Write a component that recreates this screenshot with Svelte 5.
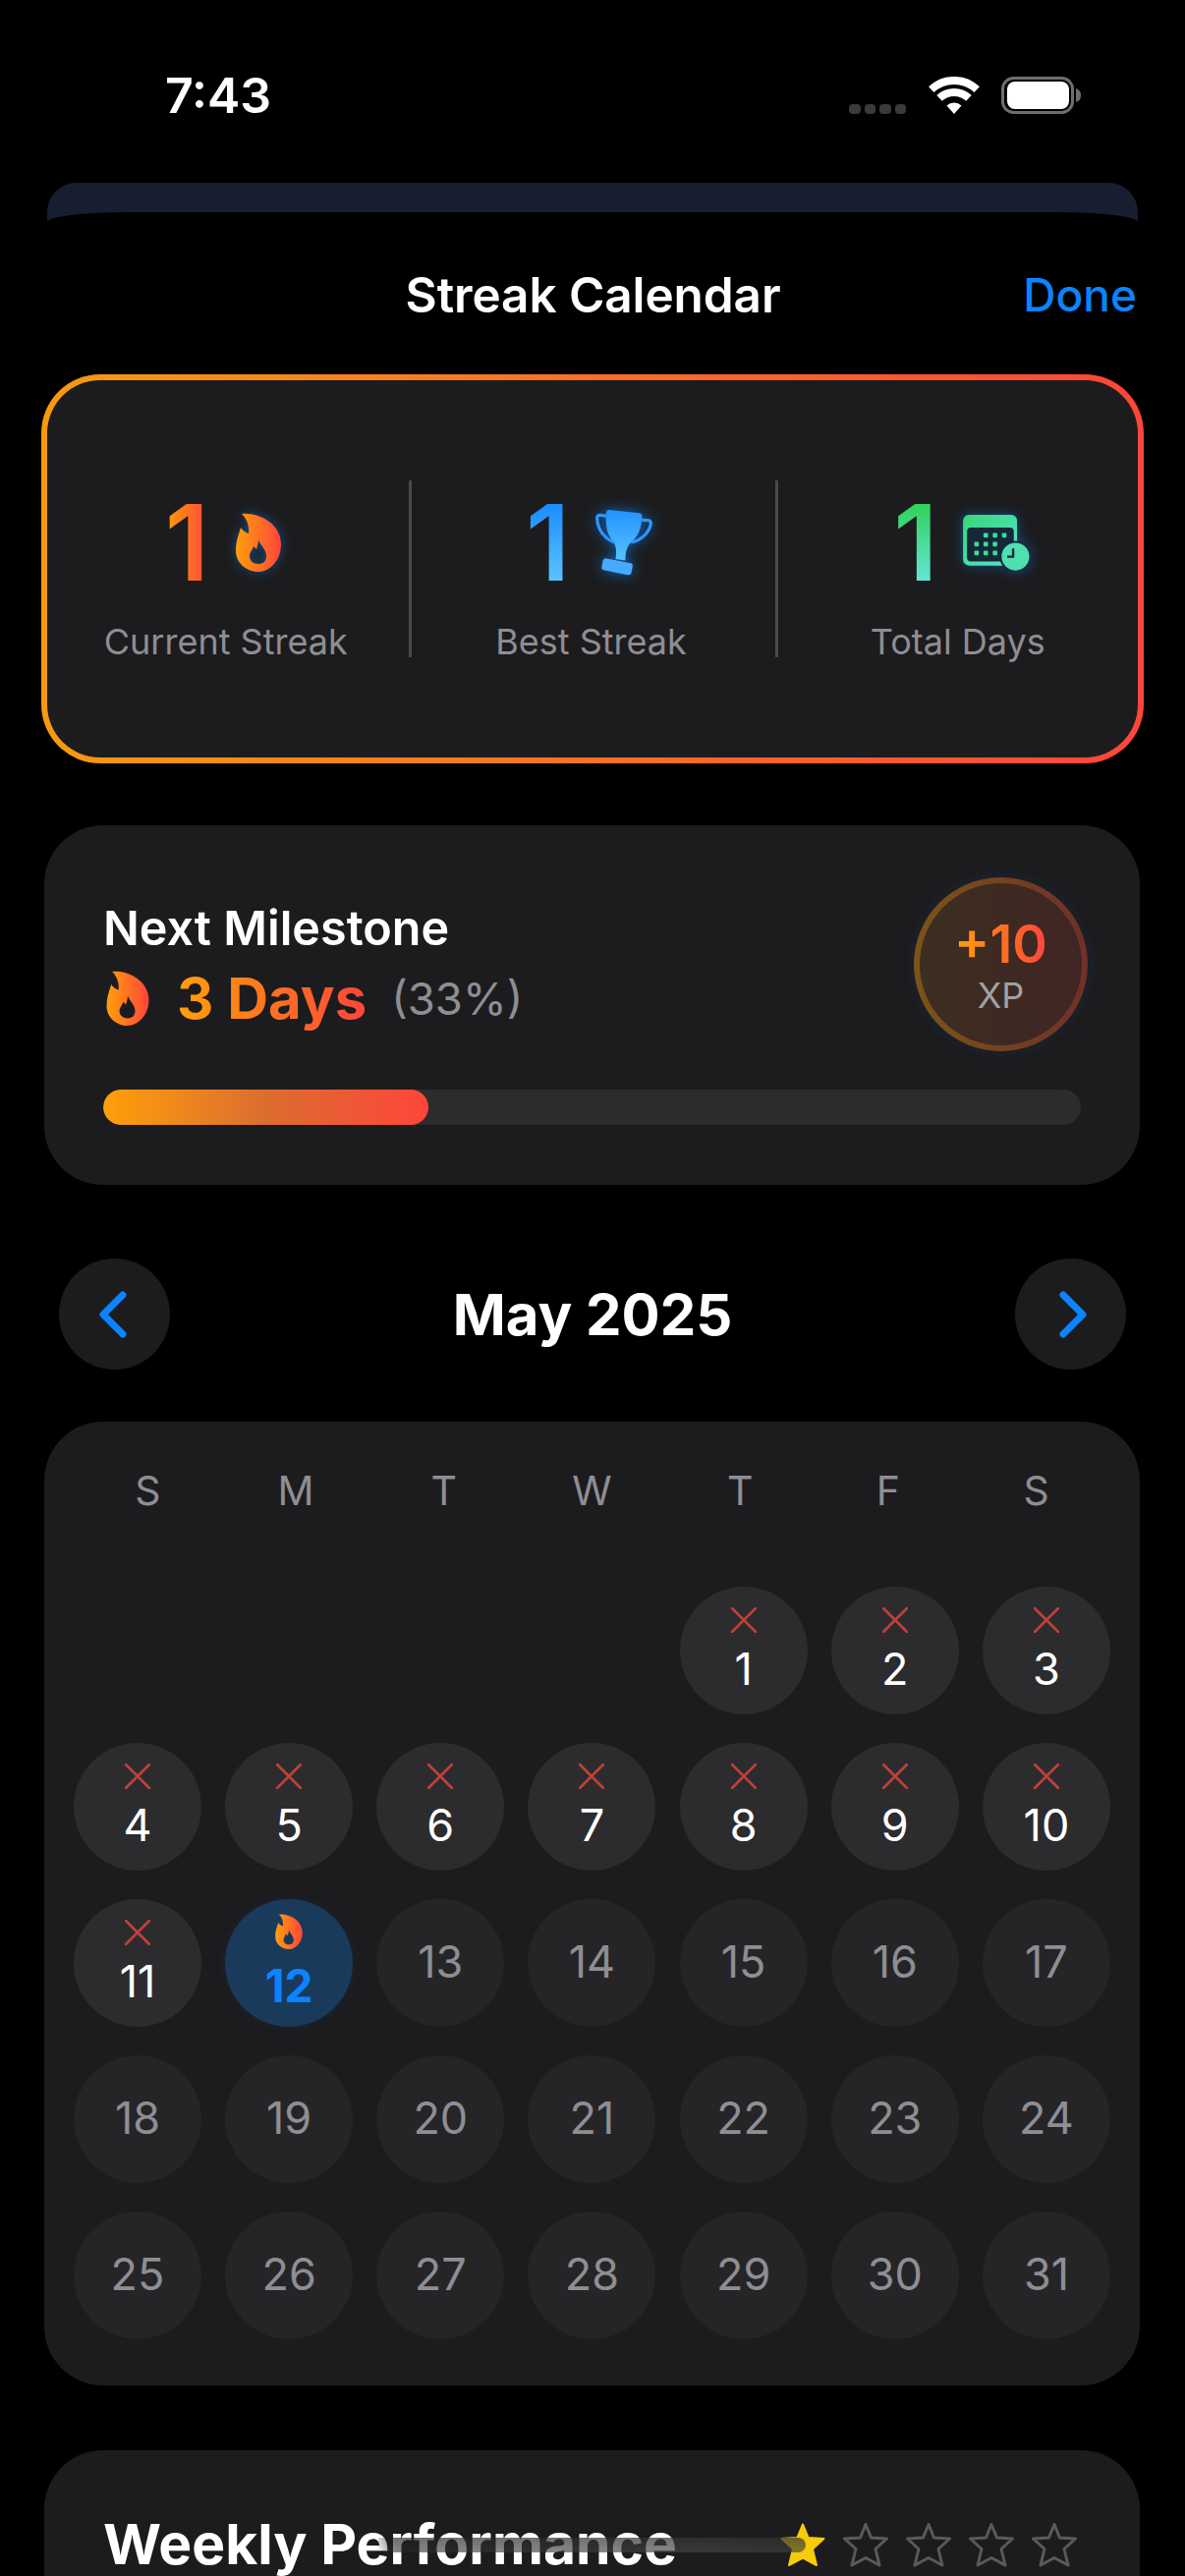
<script>
  const weekdays = ['S', 'M', 'T', 'W', 'T', 'F', 'S'];
  const blanks = [0, 1, 2, 3];
  const days = Array.from({ length: 31 }, (_, i) => i + 1);
  const stars = [1, 2, 3, 4];
  const flame = 'M6 1C22-1 46 10 46 32C46 50 33 60 23 60C10 60 0 50 0 39C0 28 3 22 5 15C7 18 10 20 13 21C14 13 11 6 6 1ZM23 27C24 32 31 37 31 44C31 50 27 52 23 52C18 52 14 49 14 44C14 40 17 38 18 34C20 36 21 37 21 37C22 34 23 30 23 27Z';
  const starPath = 'M23 1.5L28.5 15L44.5 16L33 26.5L37 43L23 35.5L9 43L13 26.5L1.5 16L17.5 15Z';
</script>

<div class="page">
  <svg class="defs" width="0" height="0" aria-hidden="true">
    <defs>
      <linearGradient id="fire" x1="0" y1="0" x2="1" y2="0">
        <stop offset="0" stop-color="#ff9f0a" />
        <stop offset="1" stop-color="#ff453a" />
      </linearGradient>
      <linearGradient id="blue" x1="0" y1="0" x2="0" y2="1">
        <stop offset="0" stop-color="#2293ff" />
        <stop offset="1" stop-color="#5abfff" />
      </linearGradient>
      <linearGradient id="green" x1="0" y1="0" x2="1" y2="1">
        <stop offset="0" stop-color="#34d778" />
        <stop offset="1" stop-color="#5ce2cc" />
      </linearGradient>
    </defs>
  </svg>

  <header class="status">
    <span class="time">7:43</span>
    <div class="status-icons">
      <div class="signal"><i></i><i></i><i></i><i></i></div>
      <svg class="wifi" viewBox="0 0 52 38">
        <path d="M2.8 13.1A34 34 0 0 1 49.2 13.1M11 21.9A22 22 0 0 1 41 21.9" fill="none" stroke="#fff" stroke-width="8" />
        <path d="M26 38L18.5 29.5A11 11 0 0 1 33.5 29.5Z" fill="#fff" />
      </svg>
      <svg class="battery" viewBox="0 0 81 38">
        <rect x="1.5" y="1.5" width="71" height="35" rx="11" fill="none" stroke="#6e6e6e" stroke-width="3" />
        <rect x="6" y="5" width="63" height="28" rx="8" fill="#fff" />
        <path d="M76 12C79 13 81 15 81 19C81 23 79 25 76 26Z" fill="#6e6e6e" />
      </svg>
    </div>
  </header>

  <div class="back-sheet"><div class="back-lip"></div></div>

  <nav class="nav">
    <span></span>
    <h1 class="title">Streak Calendar</h1>
    <span class="done">Done</span>
  </nav>

  <section class="stats">
    <div class="stat stat-a">
      <div class="stat-row row-a">
        <span class="num fire-text">1</span>
        <svg class="glow-blue flame-lg" viewBox="0 0 46 60"><path d={flame} fill="url(#fire)" fill-rule="evenodd" /></svg>
      </div>
      <span class="stat-label">Current Streak</span>
    </div>
    <div class="stat stat-b">
      <div class="stat-row row-b">
        <span class="num blue-text">1</span>
        <svg class="glow-strong trophy" viewBox="0 0 162 192">
          <path d="M38 3L126 12Q133 13 133 20C133 45 125 75 108 90C92 102 85 118 85 148L57 144C60 125 60 105 47 90C30 70 28 40 30 10Q31 3 38 3Z" fill="url(#blue)" />
          <path d="M28 142L100 156Q107 157 106 165L102 185Q100 191 92 190L22 176Q16 174 17 168L20 150Q22 142 28 142Z" fill="#48aaff" />
          <path d="M30 20L14 18Q3 17 4 29C6 60 25 84 50 95M134 32L150 33Q160 34 158 45C152 70 130 90 105 95" fill="none" stroke="#2a98ff" stroke-width="9" stroke-linecap="round" />
        </svg>
      </div>
      <span class="stat-label">Best Streak</span>
    </div>
    <div class="stat">
      <div class="stat-row row-c">
        <span class="num green-text">1</span>
        <svg class="glow-blue cal-icon" viewBox="0 0 202 170">
          <rect width="164" height="154" rx="18" fill="url(#green)" />
          <rect x="12" y="39" width="142" height="103" rx="12" fill="#15283a" />
          <g fill="#3ddb93">
            <rect x="62" y="55" width="14" height="14" rx="3" /><rect x="90" y="55" width="14" height="14" rx="3" /><rect x="118" y="55" width="14" height="14" rx="3" />
            <rect x="34" y="82" width="14" height="14" rx="3" /><rect x="62" y="82" width="14" height="14" rx="3" /><rect x="90" y="82" width="14" height="14" rx="3" />
            <rect x="34" y="109" width="14" height="14" rx="3" /><rect x="62" y="109" width="14" height="14" rx="3" /><rect x="90" y="109" width="14" height="14" rx="3" />
          </g>
          <circle cx="159" cy="127" r="48" fill="#15283a" />
          <circle cx="159" cy="127" r="42" fill="#4fdfb0" />
          <path d="M152 102V127H134" fill="none" stroke="#15283a" stroke-width="7" />
        </svg>
      </div>
      <span class="stat-label">Total Days</span>
    </div>
  </section>

  <section class="card milestone">
    <div class="ms-top">
      <div class="ms-text">
        <span class="ms-title">Next Milestone</span>
        <div class="ms-days">
          <svg class="flame-md" viewBox="0 0 46 60"><path d={flame} fill="url(#fire)" fill-rule="evenodd" /></svg>
          <span class="ms-count fire-text">3 Days</span>
          <span class="ms-pct">(33%)</span>
        </div>
      </div>
      <div class="xp">
        <span class="xp-num fire-text">+10</span>
        <span class="xp-label">XP</span>
      </div>
    </div>
    <div class="track"><div class="fill"></div></div>
  </section>

  <div class="month">
    <button class="round" aria-label="Previous month">
      <svg class="chev-l" width="28" height="48" viewBox="0 0 28 48"><path d="M24 4L4 24L24 44" fill="none" stroke="#0a84ff" stroke-width="7" stroke-linecap="round" stroke-linejoin="round" /></svg>
    </button>
    <h2 class="month-name">May 2025</h2>
    <button class="round" aria-label="Next month">
      <svg class="chev-r" width="28" height="48" viewBox="0 0 28 48"><path d="M4 4L24 24L4 44" fill="none" stroke="#0a84ff" stroke-width="7" stroke-linecap="round" stroke-linejoin="round" /></svg>
    </button>
  </div>

  <section class="card calendar">
    <div class="weekdays">
      {#each weekdays as w}<span>{w}</span>{/each}
    </div>
    <div class="days">
      {#each blanks as b (b)}<span class="blank"></span>{/each}
      {#each days as d (d)}
        {#if d < 12}
          <div class="day missed">
            <svg class="x" viewBox="0 0 26 26"><path d="M1 1L25 25M25 1L1 25" stroke="#c2403a" stroke-width="2.6" stroke-linecap="round" /></svg>
            <span>{d}</span>
          </div>
        {:else if d === 12}
          <div class="day today">
            <svg class="flame-sm" viewBox="0 0 46 60"><path d={flame} fill="url(#fire)" fill-rule="evenodd" /></svg>
            <span>{d}</span>
          </div>
        {:else}
          <div class="day future"><span>{d}</span></div>
        {/if}
      {/each}
    </div>
  </section>

  <section class="card weekly">
    <h2 class="weekly-title">Weekly Performance</h2>
    <div class="stars">
      <svg class="star" viewBox="0 0 46 45"><path d={starPath} fill="#f5cc0a" stroke="#f5cc0a" stroke-width="2" stroke-linejoin="round" /></svg>
      {#each stars as s (s)}
        <svg class="star" viewBox="0 0 46 45"><path d={starPath} fill="none" stroke="#5a5a5c" stroke-width="3" stroke-linejoin="round" /></svg>
      {/each}
    </div>
  </section>

  <div class="home"></div>
</div>

<style>
  :global(body) {
    margin: 0;
    background: #000;
  }
  .page {
    position: relative;
    width: 1206px;
    height: 2622px;
    overflow: hidden;
    background: #000;
    color: #fff;
    font-family: Inter, "Liberation Sans", sans-serif;
  }
  .defs {
    position: absolute;
  }
  .status {
    height: 186px;
    box-sizing: border-box;
    padding: 78px 106px 0 168px;
    display: flex;
    justify-content: space-between;
    align-items: flex-start;
  }
  .time {
    font-size: 50px;
    font-weight: 600;
    line-height: 38px;
  }
  .status-icons {
    display: flex;
    align-items: flex-start;
    gap: 22px;
  }
  .signal {
    display: flex;
    gap: 4px;
    margin-top: 28px;
    margin-right: 1px;
  }
  .signal i {
    display: block;
    width: 11.5px;
    height: 10px;
    border-radius: 4px;
    background: #3a3a3c;
  }
  .wifi {
    width: 52px;
    height: 38px;
  }
  .battery {
    width: 81px;
    height: 38px;
  }
  .back-sheet {
    position: relative;
    height: 40px;
    margin: 0 48px;
    background: #161e30;
    border-radius: 30px 30px 0 0;
  }
  .back-lip {
    position: absolute;
    left: 0;
    right: 0;
    bottom: 0;
    height: 10px;
    background: #000;
    border-radius: 82px 82px 0 0 / 10px 10px 0 0;
  }
  .nav {
    height: 155px;
    box-sizing: border-box;
    padding: 0 49px 8px 50px;
    display: grid;
    grid-template-columns: 1fr auto 1fr;
    align-items: center;
  }
  .title {
    margin: 0;
    font-size: 49.5px;
    font-weight: 600;
    line-height: 60px;
    letter-spacing: -0.1px;
  }
  .done {
    justify-self: end;
    font-size: 46px;
    font-weight: 500;
    color: #0a84ff;
  }
  .stats {
    height: 396px;
    box-sizing: border-box;
    margin: 0 42px;
    border: 6px solid transparent;
    border-radius: 60px;
    background: linear-gradient(#1c1c1e, #1c1c1e) padding-box, linear-gradient(90deg, #f79a0e, #ff453a) border-box;
    display: grid;
    grid-template-columns: 367.5px 373px 1fr;
    align-items: center;
  }
  .stat {
    height: 180px;
    box-sizing: border-box;
    display: flex;
    flex-direction: column;
    align-items: center;
    justify-content: flex-start;
    border-left: 3px solid #4a4a4c;
  }
  .stat-a {
    border-left-color: transparent;
    padding-right: 7px;
  }
  .stat-b {
    padding-right: 4px;
  }
  .stat-row {
    display: flex;
    align-items: center;
    height: 100px;
    margin-top: 13px;
    gap: 24px;
  }
  .row-a {
    gap: 27px;
    padding-right: 6px;
  }
  .row-b {
    gap: 26px;
    padding-right: 4px;
  }
  .row-c {
    gap: 26px;
    padding-left: 8px;
  }
  .num {
    font-size: 107px;
    font-weight: 600;
    line-height: 100px;
  }
  .stat-label {
    margin-top: 29px;
    font-size: 36px;
    line-height: 44px;
    color: #8e8e93;
  }
  .fire-text {
    background: linear-gradient(90deg, #ff9f0a, #ff453a);
    -webkit-background-clip: text;
    background-clip: text;
    color: transparent;
  }
  .blue-text {
    background: linear-gradient(180deg, #1a8cff 10%, #5ac4ff 90%);
    -webkit-background-clip: text;
    background-clip: text;
    color: transparent;
  }
  .green-text {
    background: linear-gradient(180deg, #30d158 10%, #64e6d8 90%);
    -webkit-background-clip: text;
    background-clip: text;
    color: transparent;
  }
  .glow-blue {
    filter: drop-shadow(0 0 6px rgba(10, 132, 255, 0.45));
  }
  .glow-strong {
    filter: drop-shadow(0 0 7px rgba(10, 132, 255, 0.7));
  }
  .flame-lg {
    width: 46px;
    height: 60px;
  }
  .trophy {
    width: 58px;
    height: 68px;
  }
  .cal-icon {
    width: 68px;
    height: 57px;
  }
  .card {
    margin: 0 46px 0 45px;
    background: #1c1c1e;
    border-radius: 60px;
  }
  .milestone {
    margin-top: 63px;
    height: 366px;
    box-sizing: border-box;
    padding: 53px 60px 0;
  }
  .ms-top {
    display: flex;
    justify-content: space-between;
    align-items: flex-start;
  }
  .ms-text {
    display: flex;
    flex-direction: column;
    margin-top: 22px;
  }
  .ms-title {
    font-size: 48.5px;
    font-weight: 600;
    line-height: 60px;
  }
  .ms-days {
    display: flex;
    align-items: center;
    margin-top: 6px;
    height: 70px;
  }
  .flame-md {
    width: 44px;
    height: 56px;
    margin-right: 28px;
    margin-left: 3px;
  }
  .ms-count {
    font-size: 58px;
    font-weight: 700;
    margin-right: 25px;
  }
  .ms-pct {
    font-size: 45.5px;
    color: #8e8e93;
  }
  .xp {
    width: 177px;
    height: 177px;
    box-sizing: border-box;
    margin-right: -7px;
    padding-top: 5px;
    border: 6px solid transparent;
    border-radius: 50%;
    background: linear-gradient(90deg, #3c2e20, #402524) padding-box, linear-gradient(90deg, #7a5418, #6f3028) border-box;
    box-shadow: 0 0 14px rgba(10, 132, 255, 0.1);
    display: flex;
    flex-direction: column;
    align-items: center;
    justify-content: center;
  }
  .xp-num {
    font-size: 54px;
    font-weight: 600;
    line-height: 58px;
  }
  .xp-label {
    font-size: 36px;
    line-height: 46px;
    color: #a0a0a4;
  }
  .track {
    margin-top: 39px;
    height: 36px;
    border-radius: 18px;
    background: #2c2c2e;
    overflow: hidden;
  }
  .fill {
    width: 331px;
    height: 100%;
    border-radius: 18px;
    background: linear-gradient(90deg, #ff9f0a, #db6d30 50%, #ff453a);
  }
  .month {
    margin: 75px 60px 0;
    display: flex;
    justify-content: space-between;
    align-items: center;
  }
  .round {
    width: 113px;
    height: 113px;
    padding: 0;
    border: none;
    border-radius: 50%;
    background: #1c1c1e;
    display: flex;
    align-items: center;
    justify-content: center;
  }
  .chev-l {
    margin-right: 4px;
  }
  .chev-r {
    margin-left: 5px;
  }
  .month-name {
    margin: 0;
    font-size: 58px;
    font-weight: 700;
  }
  .calendar {
    margin-top: 53px;
    height: 981px;
    box-sizing: border-box;
    padding: 52px 30px 48px;
  }
  .weekdays {
    display: grid;
    grid-template-columns: repeat(7, 1fr);
    text-align: center;
    font-size: 41px;
    line-height: 36px;
    color: #8e8e93;
  }
  .days {
    margin-top: 80px;
    display: grid;
    grid-template-columns: repeat(7, 130px);
    justify-content: space-between;
    row-gap: 29px;
  }
  .blank {
    height: 130px;
  }
  .day {
    width: 130px;
    height: 130px;
    box-sizing: border-box;
    border-radius: 50%;
    display: flex;
    flex-direction: column;
    align-items: center;
    font-size: 45px;
    line-height: 44px;
  }
  .missed {
    background: #2c2c2e;
    padding-top: 21px;
  }
  .x {
    width: 26px;
    height: 26px;
    margin-bottom: 15px;
  }
  .today {
    background: #1a3a5c;
    padding-top: 15px;
    color: #0a84ff;
    font-size: 46px;
    font-weight: 700;
    line-height: 46px;
    box-shadow: 0 0 14px rgba(10, 132, 255, 0.06);
  }
  .flame-sm {
    width: 28px;
    height: 36px;
    margin-bottom: 14px;
  }
  .future {
    background: #252527;
    justify-content: center;
    padding-bottom: 2px;
    color: #8e8e93;
  }
  .weekly {
    margin-top: 66px;
    height: 300px;
    padding: 60px 64px 0 60px;
    display: flex;
    justify-content: space-between;
    align-items: flex-start;
    box-sizing: border-box;
  }
  .weekly-title {
    margin: 0;
    font-size: 57px;
    font-weight: 700;
    line-height: 72px;
  }
  .stars {
    display: flex;
    gap: 18px;
    margin-top: 14px;
  }
  .star {
    width: 46px;
    height: 45px;
  }
  .home {
    position: absolute;
    left: 385px;
    top: 2583px;
    width: 435px;
    height: 15px;
    border-radius: 0 8px 8px 0;
    background:
      linear-gradient(180deg, rgba(0, 0, 0, 0.18), rgba(0, 0, 0, 0)),
      linear-gradient(90deg, rgba(41, 41, 41, 0) 0%, rgba(41, 41, 41, 0.56) 4%, rgba(73, 73, 73, 0.66) 75%, rgba(64, 64, 64, 0.62) 100%);
  }
</style>
